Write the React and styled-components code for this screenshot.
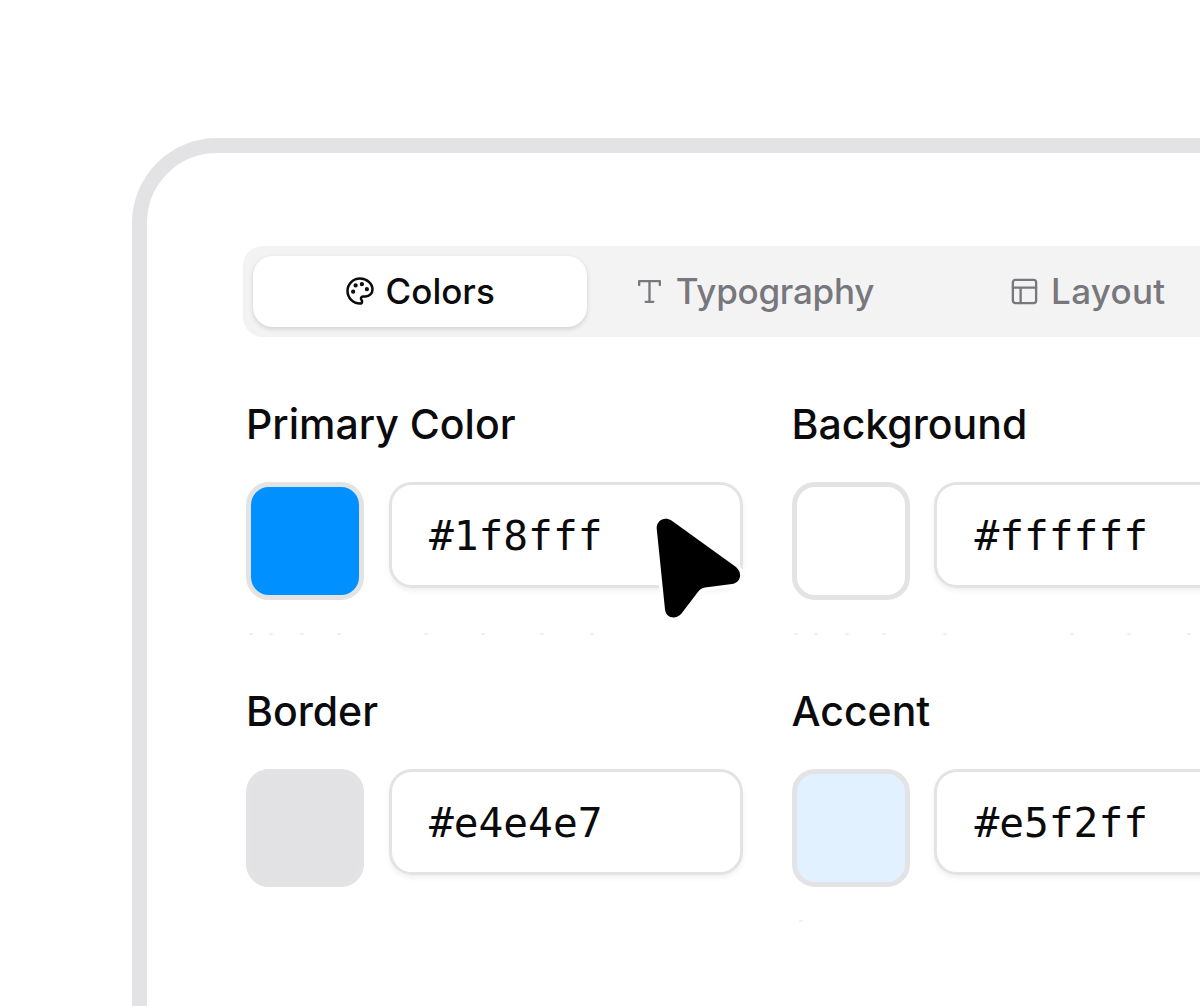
import React from "react";
import styled, { createGlobalStyle } from "styled-components";

const swatches = [
  {
    name: "Primary Color",
    value: "#1f8fff",
    fill: "#0090ff",
    ticks: [3, 23, 54, 91, 178, 235, 294, 344],
  },
  {
    name: "Background",
    value: "#ffffff",
    fill: "#ffffff",
    ticks: [2, 22, 53, 90, 151, 278, 335, 395],
  },
  { name: "Border", value: "#e4e4e7", fill: "#e2e2e4", ticks: [] },
  { name: "Accent", value: "#e5f2ff", fill: "#e1f1ff", ticks: [7] },
];

const PaletteIcon = () => (
  <Icon viewBox="0 0 24 24" $size={30} $stroke={2}>
    <path d="M12 2C6.500 2 2 6.500 2 12s4.500 10 10 10c.926 0 1.648-.746 1.648-1.688 0-.437-.18-.835-.437-1.125-.29-.289-.438-.652-.438-1.125a1.640 1.640 0 0 1 1.668-1.668h1.996c3.051 0 5.555-2.503 5.555-5.554C21.965 6.012 17.461 2 12 2z" />
    <circle cx="13.500" cy="6.500" r=".7" fill="currentColor" />
    <circle cx="17.500" cy="10.500" r=".7" fill="currentColor" />
    <circle cx="6.500" cy="12.500" r=".7" fill="currentColor" />
    <circle cx="8.500" cy="7.500" r=".7" fill="currentColor" />
  </Icon>
);

const TypeIcon = () => (
  <Icon viewBox="0 0 24 24" $size={31} $stroke={1.8}>
    <polyline points="4 7 4 4 20 4 20 7" />
    <path d="M9 20h6M12 4v16" />
  </Icon>
);

const LayoutIcon = () => (
  <Icon viewBox="0 0 24 24" $size={31} $stroke={1.8}>
    <rect x="3" y="3" width="18" height="18" rx="2" />
    <path d="M3 9h18M9 21V9" />
  </Icon>
);

const App = () => {
  return (
    <>
      <GlobalStyle />
      <Page>
        <Panel>
          <TabList>
            <Tab className="active">
              <PaletteIcon />
              <TabText>Colors</TabText>
            </Tab>
            <Tab>
              <TypeIcon />
              <TabText $spacing="-0.25px">Typography</TabText>
            </Tab>
            <Tab>
              <LayoutIcon />
              <TabText $spacing="0.3px">Layout</TabText>
            </Tab>
          </TabList>
          <Fields>
            {swatches.map((item) => (
              <Field key={item.name}>
                <Label>{item.name}</Label>
                <Controls>
                  <Swatch $fill={item.fill} />
                  <ValueBox>{item.value}</ValueBox>
                </Controls>
                <Ticks>
                  {item.ticks.map((x, i) => (
                    <Tick key={x} $space={i ? x - item.ticks[i - 1] - 4 : x} />
                  ))}
                </Ticks>
              </Field>
            ))}
          </Fields>
        </Panel>
        <Pointer viewBox="0 0 100 112">
          <path d="M6.700 18.500C6.300 10.500 14.500 6 21.500 10.500L85.300 56.500C93.500 63 90.500 73 82 74L55 77.500C51 78.300 49.500 80 47.500 82.500L31.500 103.500C26 110 16 108.500 15 99.500Z" />
        </Pointer>
      </Page>
    </>
  );
};

const GlobalStyle = createGlobalStyle`
  * {
    box-sizing: border-box;
  }
  body {
    margin: 0;
    background: #fff;
    color: #0b0b0d;
    font-family: Inter, "Liberation Sans", sans-serif;
  }
`;

const Page = styled.main`
  position: relative;
  height: 1006px;
  padding: 137.500px 0 0 132px;
  overflow: hidden;
`;

const Panel = styled.section`
  width: 1300px;
  height: 1000px;
  padding: 93px 0 0 96px;
  border: 15px solid #e3e3e5;
  border-radius: 85px;
`;

const TabList = styled.div`
  display: flex;
  width: 1021px;
  height: 91px;
  padding: 10px;
  border-radius: 20px;
  background: #f3f3f4;
`;

const Tab = styled.div`
  display: flex;
  flex: 1;
  align-items: center;
  justify-content: center;
  gap: 11px;
  border-radius: 20px;
  color: #77777c;
  font-size: 35px;
  font-weight: 500;
  &.active {
    padding-right: 1px;
    color: #0b0b0d;
    background: #fff;
    box-shadow: 0 2px 5px rgba(0, 0, 0, 0.14);
  }
`;

const TabText = styled.span`
  padding-top: 1px;
  line-height: 1;
  letter-spacing: ${(props) => props.$spacing || "normal"};
`;

const Icon = styled.svg`
  flex: none;
  width: ${(props) => props.$size}px;
  height: ${(props) => props.$size}px;
  fill: none;
  stroke: currentColor;
  stroke-width: ${(props) => props.$stroke};
  stroke-linecap: round;
  stroke-linejoin: round;
`;

const Fields = styled.div`
  display: grid;
  grid-template-columns: 497px 497px;
  column-gap: 48.500px;
  padding: 62.500px 0 0 3px;
`;

const Field = styled.div`
  height: 287.300px;
`;

const Label = styled.div`
  height: 82.700px;
  padding-top: 3.500px;
  font-size: 41px;
  font-weight: 500;
  line-height: 42px;
  white-space: nowrap;
`;

const Controls = styled.div`
  display: flex;
  gap: 24.500px;
  height: 118px;
`;

const Swatch = styled.div`
  flex: none;
  width: 118.400px;
  height: 118px;
  border: 5px solid #e3e3e5;
  border-radius: 23px;
  background: ${(props) => props.$fill};
`;

const ValueBox = styled.div`
  flex: 1;
  height: 106px;
  padding-left: 37px;
  border: 3px solid #e3e3e5;
  border-radius: 23px;
  box-shadow: 0 3px 5px rgba(0, 0, 0, 0.06);
  font-family: "DejaVu Sans Mono", monospace;
  font-size: 41.200px;
  line-height: 103px;
`;

/* faint ascender marks under each control row */
const Ticks = styled.div`
  display: flex;
  height: 2px;
  margin-top: 33px;
`;

const Tick = styled.i`
  flex: none;
  width: 4px;
  margin-left: ${(props) => props.$space}px;
  border-radius: 2px 2px 0 0;
  background: #ededee;
`;

const Pointer = styled.svg`
  position: absolute;
  top: 510px;
  left: 650px;
  width: 100px;
  height: 112px;
  fill: #000;
  stroke: #fff;
  stroke-width: 7;
  stroke-linejoin: round;
  paint-order: stroke;
`;

export default App;
